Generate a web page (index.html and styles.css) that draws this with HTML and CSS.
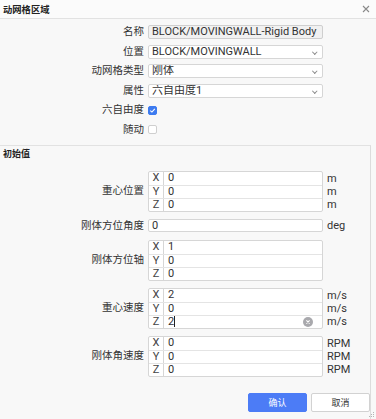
FILE: index.html
```html
<!DOCTYPE html>
<html lang="zh">
<head>
    <meta charset="UTF-8">
    <title>动网格区域</title>
    <link rel="stylesheet" href="styles.css">
</head>
<body>

<div class="dialog">
    <!-- Title bar -->
    <header class="titlebar">
        <span class="title">动网格区域</span>
        <svg class="close" width="8" height="8" viewBox="0 0 8 8"><path d="M1 1L7 7M7 1L1 7" stroke="#8a8a8a" stroke-width="1.1"/></svg>
    </header>

    <!-- Zone settings -->
    <section class="zone">
        <div class="row">
            <label>名称</label>
            <div class="field disabled">BLOCK/MOVINGWALL-Rigid Body</div>
        </div>
        <div class="row">
            <label>位置</label>
            <div class="field select">BLOCK/MOVINGWALL<span class="chev"></span></div>
        </div>
        <div class="row">
            <label>动网格类型</label>
            <div class="field select">刚体<span class="chev"></span></div>
        </div>
        <div class="row">
            <label>属性</label>
            <div class="field select">六自由度1<span class="chev"></span></div>
        </div>
        <div class="row">
            <label>六自由度</label>
            <span class="check checked"><svg width="7" height="7" viewBox="0 0 7 7"><path d="M1.3 3.7L2.9 5.1L5.8 1.9" fill="none" stroke="#fff" stroke-width="1.1"/></svg></span>
        </div>
        <div class="row">
            <label>随动</label>
            <span class="check"></span>
        </div>
    </section>

    <!-- Initial values -->
    <section class="initial">
        <h2>初始值</h2>

        <div class="row">
            <label>重心位置</label>
            <div class="vec">
                <div class="vline"><span class="axis">X</span><span class="val">0</span></div>
                <div class="vline"><span class="axis">Y</span><span class="val">0</span></div>
                <div class="vline"><span class="axis">Z</span><span class="val">0</span></div>
            </div>
            <div class="units"><span>m</span><span>m</span><span>m</span></div>
        </div>

        <div class="row">
            <label>刚体方位角度</label>
            <div class="field num">0</div>
            <span class="unit">deg</span>
        </div>

        <div class="row">
            <label>刚体方位轴</label>
            <div class="vec">
                <div class="vline"><span class="axis">X</span><span class="val">1</span></div>
                <div class="vline"><span class="axis">Y</span><span class="val">0</span></div>
                <div class="vline"><span class="axis">Z</span><span class="val">0</span></div>
            </div>
            <div class="units"></div>
        </div>

        <div class="row">
            <label>重心速度</label>
            <div class="vec">
                <div class="vline"><span class="axis">X</span><span class="val">2</span></div>
                <div class="vline"><span class="axis">Y</span><span class="val">0</span></div>
                <div class="vline"><span class="axis">Z</span><span class="val">2<i class="caret"></i></span>
                    <svg class="clear" width="10" height="10" viewBox="0 0 10 10"><circle cx="5" cy="5" r="5" fill="#a9a9ad"/><path d="M3.4 3.4L6.6 6.6M6.6 3.4L3.4 6.6" stroke="#fff" stroke-width="1.1"/></svg>
                </div>
            </div>
            <div class="units"><span>m/s</span><span>m/s</span><span>m/s</span></div>
        </div>

        <div class="row">
            <label>刚体角速度</label>
            <div class="vec">
                <div class="vline"><span class="axis">X</span><span class="val">0</span></div>
                <div class="vline"><span class="axis">Y</span><span class="val">0</span></div>
                <div class="vline"><span class="axis">Z</span><span class="val">0</span></div>
            </div>
            <div class="units"><span>RPM</span><span>RPM</span><span>RPM</span></div>
        </div>

        <footer class="actions">
            <button class="btn primary">确认</button>
            <button class="btn">取消</button>
        </footer>
    </section>

    <svg class="grip" width="6" height="6" viewBox="0 0 6 6"><g fill="#b5b5b5"><rect x="4" y="0" width="1" height="1"/><rect x="2" y="2" width="1" height="1"/><rect x="4" y="2" width="1" height="1"/><rect x="0" y="4" width="1" height="1"/><rect x="2" y="4" width="1" height="1"/><rect x="4" y="4" width="1" height="1"/></g></svg>
</div>

</body>
</html>
```

FILE: styles.css
```css
/* Global styles */
body {
    margin: 0;
    font-family: Roboto, "Noto Sans CJK SC", sans-serif;
    font-size: 10.5px;
    color: #333;
    background: #f8f8f8;
}

.dialog {
    position: relative;
    width: 376px;
    height: 419px;
    background: #f8f8f8;
    overflow: hidden;
}

.titlebar {
    height: 18px;
    border-bottom: 1px solid #e2e2e2;
    background: #fbfbfb;
    display: flex;
    align-items: center;
    justify-content: space-between;
    padding: 0 6px 0 3px;
}

.title {
    font-weight: bold;
    font-size: 9.3px;
    color: #222;
}

.zone {
    height: 126px;
    box-sizing: border-box;
    padding-top: 6px;
    display: flex;
    flex-direction: column;
    gap: 5.5px;
}

.row {
    display: grid;
    grid-template-columns: 144px 175px auto;
    column-gap: 4px;
    align-items: center;
}

.row label {
    text-align: right;
    line-height: 14px;
    color: #333;
}

.field {
    position: relative;
    height: 14px;
    box-sizing: border-box;
    border: 1px solid #d6d6d6;
    border-radius: 2px;
    background: #fff;
    padding: 0 3px;
    line-height: 12px;
    font-size: 11px;
    white-space: nowrap;
    overflow: hidden;
}

.field.num {
    height: 13px;
    line-height: 11px;
}

.field.disabled {
    background: #f1f1f1;
    border-color: #cfcfcf;
    color: #333;
}

.chev {
    position: absolute;
    right: 6px;
    top: 4px;
    width: 2.5px;
    height: 2.5px;
    border-right: 1px solid #8c8c8c;
    border-bottom: 1px solid #8c8c8c;
    transform: rotate(45deg);
}

.check {
    width: 9px;
    height: 9px;
    box-sizing: border-box;
    border: 1px solid #cfcfcf;
    border-radius: 2px;
    background: #fff;
    display: flex;
    align-items: center;
    justify-content: center;
}

.check.checked {
    background: #3d7bf0;
    border-color: #3d7bf0;
}

/* Initial values section */
.initial {
    border-top: 1px solid #e2e2e2;
    border-right: 1px solid #dcdcdc;
    width: 371px;
    height: 274px;
    box-sizing: border-box;
    padding-bottom: 7px;
    display: flex;
    flex-direction: column;
    gap: 7px;
}

.initial h2 {
    margin: 0 0 2.5px;
    padding: 2px 0 0 3px;
    font-size: 9px;
    line-height: 13px;
    font-weight: bold;
    color: #222;
}

.vec {
    border: 1px solid #d6d6d6;
    border-radius: 2px;
    background: #fff;
}

.vline {
    position: relative;
    display: flex;
    box-sizing: border-box;
    height: 13px;
    line-height: 12px;
    font-size: 11px;
}

.vline + .vline {
    border-top: 1px solid #e4e4e4;
}

.axis {
    width: 14px;
    text-align: center;
    border-right: 1px solid #d6d6d6;
    color: #444;
}

.val {
    padding-left: 4px;
}

.caret {
    display: inline-block;
    width: 1px;
    height: 11px;
    background: #222;
    vertical-align: -2px;
}

.clear {
    position: absolute;
    right: 9px;
    top: 1px;
}

.units {
    display: flex;
    flex-direction: column;
    font-size: 11px;
    line-height: 13px;
}

.unit {
    font-size: 11px;
}

.actions {
    margin-top: auto;
    display: flex;
    justify-content: flex-end;
    gap: 4px;
}

.btn {
    width: 59px;
    height: 19px;
    border: 1px solid #d2d2d2;
    border-radius: 2px;
    background: #fff;
    font-family: inherit;
    font-size: 9px;
    color: #333;
    padding: 0;
}

.btn.primary {
    background: #4c7cf6;
    border-color: #4c7cf6;
    color: #fff;
}

.grip {
    position: absolute;
    right: 1px;
    bottom: 1px;
}
```
